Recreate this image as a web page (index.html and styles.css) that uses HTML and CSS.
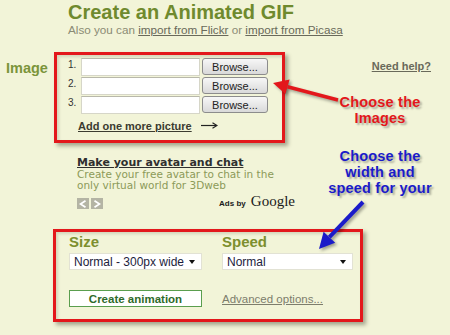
FILE: index.html
```html
<!DOCTYPE html>
<html lang="en">
<head>
    <meta charset="UTF-8">
    <meta name="viewport" content="width=device-width, initial-scale=1.0">
    <title>Create an Animated GIF</title>
    <link rel="stylesheet" href="styles.css">
</head>
<body>
    <div class="page">
        <header class="head">
            <h1>Create an Animated GIF</h1>
            <p class="sub">Also you can <a href="#">import from Flickr</a> or <a href="#">import from Picasa</a></p>
        </header>

        <section class="image-row">
            <h2 class="label">Image</h2>
            <div class="frame files">
                <div class="file-row">
                    <span class="num">1.</span>
                    <input class="path" type="text">
                    <button class="browse" type="button">Browse...</button>
                </div>
                <div class="file-row">
                    <span class="num">2.</span>
                    <input class="path" type="text">
                    <button class="browse" type="button">Browse...</button>
                </div>
                <div class="file-row">
                    <span class="num">3.</span>
                    <input class="path" type="text">
                    <button class="browse" type="button">Browse...</button>
                </div>
                <a class="more" href="#">Add one more picture</a>
                <svg class="more-arrow" width="17" height="7" viewBox="0 0 17 7">
                    <path d="M0 3.5H15" stroke="#222" stroke-width="1.2"/>
                    <path d="M11.5 0.8L16 3.5L11.5 6.2" fill="none" stroke="#222" stroke-width="1.2"/>
                </svg>
            </div>
            <a class="help" href="#">Need help?</a>
        </section>

        <aside class="ad">
            <a class="ad-title" href="#">Make your avatar and chat</a>
            <p class="ad-text">Create your free avatar to chat in the only virtual world for 3Dweb</p>
            <div class="ad-foot">
                <div class="ad-nav">
                    <span class="nav-btn">
                        <svg width="8" height="8" viewBox="0 0 8 8"><path d="M6.5 0.8L1.5 4L6.5 7.2" fill="none" stroke="#fff" stroke-width="1.8"/></svg>
                    </span>
                    <span class="nav-btn">
                        <svg width="8" height="8" viewBox="0 0 8 8"><path d="M1.5 0.8L6.5 4L1.5 7.2" fill="none" stroke="#fff" stroke-width="1.8"/></svg>
                    </span>
                </div>
                <div class="ads-by"><span class="ads-small">Ads by</span> <span class="google">Google</span></div>
            </div>
        </aside>

        <section class="frame options">
            <div class="opt-grid">
                <h3 class="opt-label">Size</h3>
                <h3 class="opt-label">Speed</h3>
                <div class="select">
                    <span>Normal - 300px wide</span>
                    <span class="caret"></span>
                </div>
                <div class="select">
                    <span>Normal</span>
                    <span class="caret"></span>
                </div>
                <button class="create" type="button">Create animation</button>
                <a class="advanced" href="#">Advanced options...</a>
            </div>
        </section>

        <!-- annotations drawn over the page -->
        <div class="note note-red">Choose the<br>Images</div>
        <div class="note note-blue">Choose the<br>width and<br>speed for your</div>
        <svg class="arrows" width="450" height="335" viewBox="0 0 450 335">
            <line x1="338" y1="100" x2="287.5" y2="86.8" stroke="#e3171b" stroke-width="3.5"/>
            <polygon points="273,83 289.6,79.6 285.4,94" fill="#e3171b"/>
            <line x1="363" y1="202" x2="329.4" y2="237.2" stroke="#1b1bc9" stroke-width="4"/>
            <polygon points="319,249 323.6,231.8 335.2,242.8" fill="#1b1bc9"/>
        </svg>
    </div>
</body>
</html>
```

FILE: styles.css
```css
:root {
    --bg: #f2f4d8;
    --olive: #6f8a2e;
    --label: #7b943a;
    --gray: #8b8b74;
    --link: #69695a;
    --red: #e3171b;
    --blue: #1b1bc9;
}

* {
    margin: 0;
    padding: 0;
    box-sizing: border-box;
}

body {
    background: var(--bg);
    font-family: 'Liberation Sans', Arial, sans-serif;
    color: #222;
}

.page {
    position: relative;
    width: 450px;
    height: 335px;
    overflow: hidden;
    padding-top: 1px;
}

.head {
    margin-left: 68px;
}

.head h1 {
    font-size: 20px;
    line-height: 22px;
    font-weight: bold;
    color: var(--olive);
}

.sub {
    font-size: 11.7px;
    line-height: 14px;
    color: var(--gray);
}

.sub a {
    color: var(--link);
}

/* red annotation frames */
.frame {
    border: 3px solid var(--red);
    box-shadow: 3px 3px 4px rgba(70, 70, 50, 0.45), inset 2px 2px 3px rgba(70, 70, 50, 0.18);
}

.image-row {
    display: flex;
    align-items: flex-start;
    margin-top: 15px;
}

.label {
    width: 54px;
    padding-left: 6px;
    margin-top: 8px;
    font-size: 14.5px;
    line-height: 17px;
    color: var(--label);
}

.files {
    width: 231px;
    padding: 3px 14px 6px 11px;
}

.file-row {
    display: flex;
    align-items: flex-start;
    height: 18px;
    margin-bottom: 1px;
}

.num {
    width: 13px;
    font-size: 10px;
    line-height: 14px;
    color: #333;
}

.path {
    width: 119px;
    height: 18px;
    border: 1px solid #d6d6c8;
    border-top-color: #b8b8aa;
    background: #fff;
}

.browse {
    width: 66px;
    height: 17px;
    margin-left: 2px;
    border: 1px solid #8c8c8c;
    border-radius: 3px;
    background: linear-gradient(#f7f7f7, #d9d9d9);
    font-family: 'Liberation Sans', Arial, sans-serif;
    font-size: 11px;
    line-height: 15px;
    padding-top: 1px;
    color: #222;
}

.more {
    display: inline-block;
    margin: 5px 0 0 10px;
    font-size: 11px;
    line-height: 13px;
    font-weight: bold;
    color: #3b3b30;
}

.more-arrow {
    margin-left: 5px;
    vertical-align: 1px;
}

.help {
    margin: 8px 19px 0 auto;
    font-size: 11px;
    line-height: 13px;
    font-weight: bold;
    color: var(--link);
}

/* ad block */
.ad {
    width: 218px;
    margin: 13px 0 0 77px;
    font-family: 'DejaVu Sans', Verdana, sans-serif;
}

.ad-title {
    display: block;
    font-size: 11px;
    line-height: 13px;
    font-weight: bold;
    color: #2f2f2f;
}

.ad-text {
    font-size: 10.5px;
    line-height: 11px;
    color: #8c9a58;
}

.ad-foot {
    display: flex;
    justify-content: space-between;
    align-items: flex-start;
    margin-top: 3px;
}

.ad-nav {
    display: flex;
    gap: 2px;
    margin-top: 4px;
}

.nav-btn {
    display: flex;
    align-items: center;
    justify-content: center;
    width: 12px;
    height: 11px;
    background: #b4b4a4;
}

.ads-by {
    line-height: 14px;
    color: #1a1a1a;
}

.ads-small {
    font-family: 'Liberation Sans', Arial, sans-serif;
    font-size: 8px;
    font-weight: bold;
}

.google {
    font-family: 'Liberation Serif', 'Times New Roman', serif;
    font-size: 15px;
}

/* size / speed */
.options {
    width: 310px;
    margin: 18px 0 0 53px;
    padding: 2px 7px 12px 13px;
}

.opt-grid {
    display: grid;
    grid-template-columns: 133px 131px;
    column-gap: 20px;
    align-items: center;
}

.opt-label {
    font-size: 15px;
    line-height: 16px;
    color: #7d8f2e;
}

.select {
    display: flex;
    align-items: center;
    justify-content: space-between;
    height: 17px;
    margin-top: 3px;
    padding: 0 6px 0 4px;
    background: #fff;
    border: 1px solid #e2e2d4;
    font-size: 12px;
    color: #1c1c3c;
}

.caret {
    width: 0;
    height: 0;
    border-left: 3.5px solid transparent;
    border-right: 3.5px solid transparent;
    border-top: 4px solid #111;
}

.create {
    height: 17px;
    margin-top: 20px;
    border: 1px solid #5a9e4e;
    background: #fff;
    font-family: 'Liberation Sans', Arial, sans-serif;
    font-size: 11.5px;
    font-weight: bold;
    color: #2f6a2a;
}

.advanced {
    margin-top: 20px;
    font-size: 11.5px;
    color: #7d7d6c;
}

/* annotation texts and arrows */
.note {
    position: absolute;
    text-align: center;
    font-size: 14.5px;
    line-height: 16.2px;
    letter-spacing: 0.2px;
    font-weight: bold;
    text-shadow: 2px 2px 2px rgba(0, 0, 0, 0.3);
}

.note-red {
    left: 330px;
    top: 94px;
    width: 100px;
    color: var(--red);
}

.note-blue {
    left: 320px;
    top: 148px;
    width: 120px;
    color: var(--blue);
}

.arrows {
    position: absolute;
    top: 0;
    left: 0;
    pointer-events: none;
    filter: drop-shadow(2px 2px 1.5px rgba(0, 0, 0, 0.35));
}
```
